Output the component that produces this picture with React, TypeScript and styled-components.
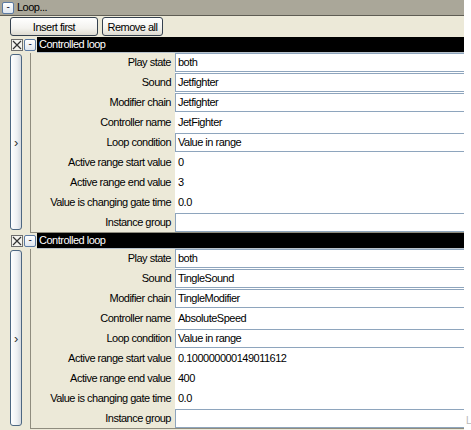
import styled, { createGlobalStyle } from "styled-components";

const GlobalStyle = createGlobalStyle`
  body {
    margin: 0;
    background: #fff;
    font-family: "Liberation Sans", Arial, sans-serif;
    font-size: 11px;
    letter-spacing: -0.5px;
    color: #000;
  }
  #root {
    width: 471px;
    height: 430px;
    overflow: hidden;
  }
`;

type Prop = { label: string; value: string; input?: boolean };

type LoopSection = { title: string; props: Prop[] };

const sections: LoopSection[] = [
  {
    title: "Controlled loop",
    props: [
      { label: "Play state", value: "both", input: true },
      { label: "Sound", value: "Jetfighter", input: true },
      { label: "Modifier chain", value: "Jetfighter", input: true },
      { label: "Controller name", value: "JetFighter" },
      { label: "Loop condition", value: "Value in range", input: true },
      { label: "Active range start value", value: "0" },
      { label: "Active range end value", value: "3" },
      { label: "Value is changing gate time", value: "0.0" },
      { label: "Instance group", value: "", input: true },
    ],
  },
  {
    title: "Controlled loop",
    props: [
      { label: "Play state", value: "both", input: true },
      { label: "Sound", value: "TingleSound", input: true },
      { label: "Modifier chain", value: "TingleModifier", input: true },
      { label: "Controller name", value: "AbsoluteSpeed" },
      { label: "Loop condition", value: "Value in range", input: true },
      { label: "Active range start value", value: "0.100000000149011612" },
      { label: "Active range end value", value: "400" },
      { label: "Value is changing gate time", value: "0.0" },
      { label: "Instance group", value: "", input: true },
    ],
  },
];

function Section({ section }: { section: LoopSection }) {
  return (
    <>
      <SectionHeader>
        <CloseBox>
          <svg width="10" height="10" viewBox="0 0 10 10">
            <path d="M1 1L9 9M9 1L1 9" stroke="#333" strokeWidth="1.2" />
          </svg>
        </CloseBox>
        <MiniButton>-</MiniButton>
        <HeaderBar>{section.title}</HeaderBar>
      </SectionHeader>
      <SectionBody>
        <ExpandButton>›</ExpandButton>
        <Panel>
          {section.props.map((p) => (
            <Row key={p.label}>
              <Label>{p.label}</Label>
              <ValueCell>
                {p.input ? <ValueBox>{p.value}</ValueBox> : <ValueText>{p.value}</ValueText>}
              </ValueCell>
            </Row>
          ))}
        </Panel>
      </SectionBody>
    </>
  );
}

export default function App() {
  return (
    <>
      <GlobalStyle />
      <Page>
        <Main>
          <TitleBar>
            <MiniButton>-</MiniButton>
            <TitleText>Loop...</TitleText>
          </TitleBar>
          <Content>
            <Toolbar>
              <Button $width={88}>Insert first</Button>
              <Button $width={61}>Remove all</Button>
            </Toolbar>
            {sections.map((s, i) => (
              <Section key={i} section={s} />
            ))}
          </Content>
        </Main>
        <Side>
          <Edge>L</Edge>
        </Side>
      </Page>
    </>
  );
}

const Page = styled.div`
  display: flex;
  width: 471px;
  height: 430px;
`;

const Main = styled.div`
  width: 464px;
  display: flex;
  flex-direction: column;
  background: #ece9d8;
`;

const Side = styled.div`
  flex: 1;
  display: flex;
  flex-direction: column;
  justify-content: flex-end;
  padding-bottom: 4px;
`;

const Edge = styled.span`
  font-size: 10px;
  color: #b8b8b8;
  padding-left: 2px;
`;

const TitleBar = styled.div`
  height: 15px;
  display: flex;
  align-items: center;
  gap: 3px;
  padding-left: 2px;
  background: #aaa799;
  border-bottom: 1px solid #5f5d54;
`;

const TitleText = styled.span`
  line-height: 15px;
`;

const MiniButton = styled.div`
  width: 12px;
  height: 12px;
  box-sizing: border-box;
  border: 1px solid #5b7aa3;
  border-radius: 2px;
  background: linear-gradient(#ffffff, #dfe6ef);
  display: flex;
  align-items: center;
  justify-content: center;
  font-size: 10px;
  line-height: 8px;
  color: #223;
  padding-bottom: 2px;
`;

const Content = styled.div`
  flex: 1;
  display: flex;
  flex-direction: column;
  padding-left: 10px;
`;

const Toolbar = styled.div`
  height: 21px;
  display: flex;
  align-items: flex-start;
  gap: 4px;
  padding-top: 1px;
  box-sizing: border-box;
`;

const Button = styled.div<{ $width: number }>`
  width: ${(p) => p.$width}px;
  height: 19px;
  box-sizing: border-box;
  border: 1px solid #35414f;
  border-radius: 3px;
  background: linear-gradient(#ffffff 0%, #f3f2ee 60%, #dedbd0 100%);
  display: flex;
  align-items: center;
  justify-content: center;
`;

const SectionHeader = styled.div`
  height: 16px;
  display: flex;
  align-items: center;
  gap: 1px;
`;

const CloseBox = styled.div`
  width: 12px;
  height: 12px;
  margin-left: 1px;
  box-sizing: border-box;
  border: 1px solid #6e6e6e;
  background: #f5f4ef;
  display: flex;
  align-items: center;
  justify-content: center;
`;

const HeaderBar = styled.div`
  flex: 1;
  align-self: stretch;
  background: #000;
  color: #fff;
  padding-left: 2px;
  line-height: 15px;
  border-bottom: 1px solid #b9c3cc;
`;

const SectionBody = styled.div`
  height: 180px;
  display: flex;
  gap: 8px;
`;

const ExpandButton = styled.div`
  width: 12px;
  margin: 1px 0 3px;
  box-sizing: border-box;
  border: 1px solid #4d6782;
  border-radius: 3px;
  background: linear-gradient(90deg, #ffffff, #eef0f2 60%, #d5dae0);
  display: flex;
  align-items: center;
  justify-content: center;
  font-size: 13px;
  color: #333;
`;

const Panel = styled.div`
  flex: 1;
  display: flex;
  flex-direction: column;
  border-left: 1px solid #8f8c7e;
  border-bottom: 1px solid #8f8c7e;
`;

const Row = styled.div`
  height: 20px;
  display: grid;
  grid-template-columns: 144px 1fr;
  &:last-child {
    height: 19px;
  }
`;

const Label = styled.div`
  text-align: right;
  padding-right: 4px;
  line-height: 18px;
  white-space: nowrap;
`;

const ValueCell = styled.div`
  background: #fff;
`;

const ValueBox = styled.div`
  height: 19px;
  box-sizing: border-box;
  border: 1px solid #8ea5bd;
  border-right: none;
  padding-left: 2px;
  line-height: 17px;
  white-space: nowrap;
`;

const ValueText = styled.div`
  padding-left: 3px;
  line-height: 18px;
  white-space: nowrap;
`;
